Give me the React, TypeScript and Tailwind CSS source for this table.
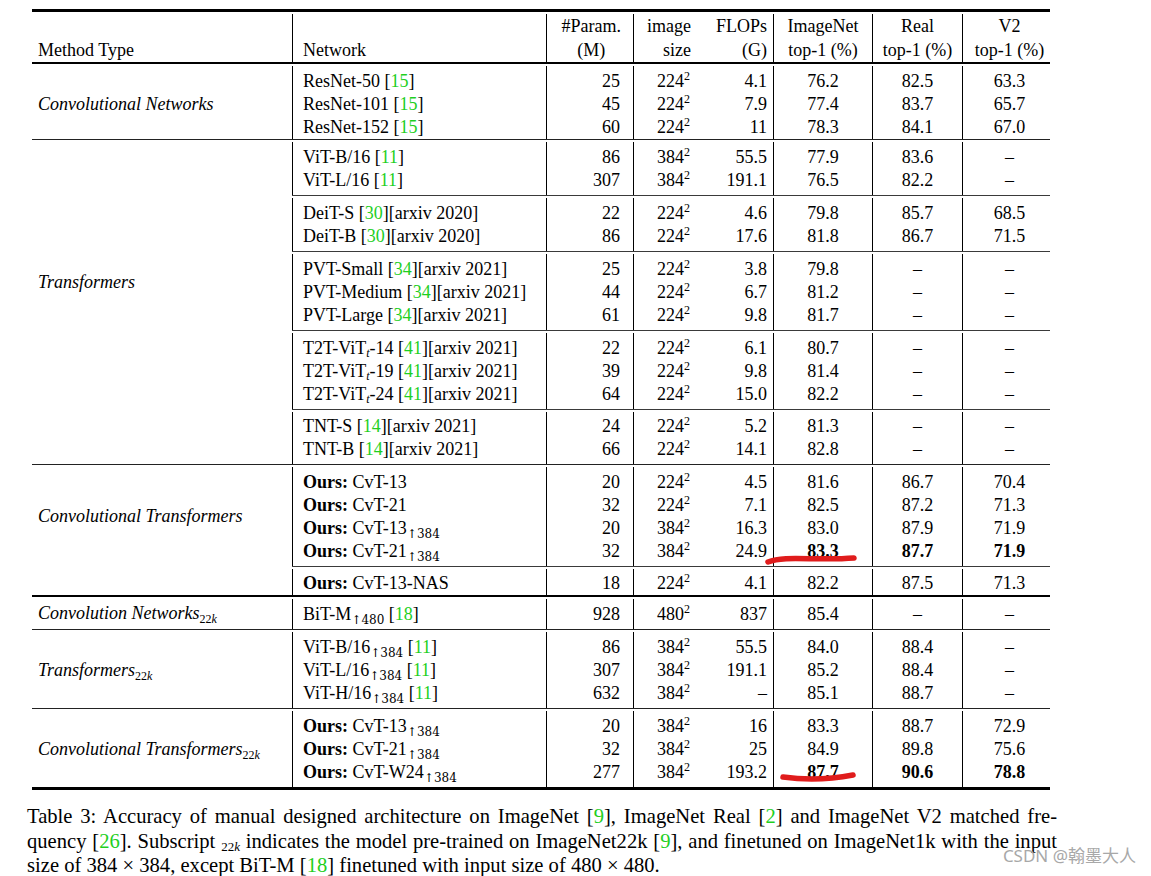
import type { ReactNode } from 'react';

type Row = {
  net: ReactNode;
  param: string;
  img: string;
  flops: string;
  im: string;
  real: string;
  v2: string;
  bold?: boolean;
};

const Cite = ({ n }: { n: number }) => (
  <>
    [<span className="text-[#1fcf1f]">{n}</span>]
  </>
);

const Up = ({ v }: { v: string }) => (
  <sub className="text-[12px] -bottom-[4px] font-['DejaVu_Serif',serif]">↑{v}</sub>
);

const Sq = ({ v }: { v: string }) => (
  <>
    {v}
    <sup className="text-[12px] -top-[7px]">2</sup>
  </>
);

const Ours = ({ children }: { children: ReactNode }) => (
  <>
    <b>Ours:</b> {children}
  </>
);

const K22 = () => (
  <sub className="text-[12px] -bottom-[4px] not-italic">
    22<i>k</i>
  </sub>
);

const Tt = () => <sub className="text-[12px] -bottom-[3px] italic">t</sub>;

const r = (
  net: ReactNode,
  param: string,
  img: string,
  flops: string,
  im: string,
  real: string,
  v2: string,
  bold = false
): Row => ({ net, param, img, flops, im, real, v2, bold });

const arxiv = (y: number) => <>[arxiv {y}]</>;

// pt / pb: padding of the bordered block, tuned per block to sit on the rules like the latex output
type Sub = { rows: Row[]; pt?: string; pb?: string };

const groups: { label: ReactNode; pad: string; subs: Sub[]; after: 'thin' | 'thick' | 'none' }[] = [
  {
    label: 'Convolutional Networks',
    pad: 'pt-[29px]',
    after: 'thin',
    subs: [
      {
        pb: 'pb-0',
        rows: [
          r(<>ResNet-50 <Cite n={15} /></>, '25', '224', '4.1', '76.2', '82.5', '63.3'),
          r(<>ResNet-101 <Cite n={15} /></>, '45', '224', '7.9', '77.4', '83.7', '65.7'),
          r(<>ResNet-152 <Cite n={15} /></>, '60', '224', '11', '78.3', '84.1', '67.0'),
        ],
      },
    ],
  },
  {
    label: 'Transformers',
    pad: 'pt-[131px]',
    after: 'thin',
    subs: [
      {
        rows: [
          r(<>ViT-B/16 <Cite n={11} /></>, '86', '384', '55.5', '77.9', '83.6', '–'),
          r(<>ViT-L/16 <Cite n={11} /></>, '307', '384', '191.1', '76.5', '82.2', '–'),
        ],
      },
      {
        rows: [
          r(<>DeiT-S <Cite n={30} />{arxiv(2020)}</>, '22', '224', '4.6', '79.8', '85.7', '68.5'),
          r(<>DeiT-B <Cite n={30} />{arxiv(2020)}</>, '86', '224', '17.6', '81.8', '86.7', '71.5'),
        ],
      },
      {
        rows: [
          r(<>PVT-Small <Cite n={34} />{arxiv(2021)}</>, '25', '224', '3.8', '79.8', '–', '–'),
          r(<>PVT-Medium <Cite n={34} />{arxiv(2021)}</>, '44', '224', '6.7', '81.2', '–', '–'),
          r(<>PVT-Large <Cite n={34} />{arxiv(2021)}</>, '61', '224', '9.8', '81.7', '–', '–'),
        ],
      },
      {
        rows: [
          r(<>T2T-ViT<Tt />-14 <Cite n={41} />{arxiv(2021)}</>, '22', '224', '6.1', '80.7', '–', '–'),
          r(<>T2T-ViT<Tt />-19 <Cite n={41} />{arxiv(2021)}</>, '39', '224', '9.8', '81.4', '–', '–'),
          r(<>T2T-ViT<Tt />-24 <Cite n={41} />{arxiv(2021)}</>, '64', '224', '15.0', '82.2', '–', '–'),
        ],
      },
      {
        pt: 'pt-[3px]',
        rows: [
          r(<>TNT-S <Cite n={14} />{arxiv(2021)}</>, '24', '224', '5.2', '81.3', '–', '–'),
          r(<>TNT-B <Cite n={14} />{arxiv(2021)}</>, '66', '224', '14.1', '82.8', '–', '–'),
        ],
      },
    ],
  },
  {
    label: 'Convolutional Transformers',
    pad: 'pt-[40px]',
    after: 'thick',
    subs: [
      {
        rows: [
          r(<Ours>CvT-13</Ours>, '20', '224', '4.5', '81.6', '86.7', '70.4'),
          r(<Ours>CvT-21</Ours>, '32', '224', '7.1', '82.5', '87.2', '71.3'),
          r(<Ours>CvT-13<Up v="384" /></Ours>, '20', '384', '16.3', '83.0', '87.9', '71.9'),
          r(<Ours>CvT-21<Up v="384" /></Ours>, '32', '384', '24.9', '83.3', '87.7', '71.9', true),
        ],
      },
      { pt: 'pt-[3px]', pb: 'pb-0', rows: [r(<Ours>CvT-13-NAS</Ours>, '18', '224', '4.1', '82.2', '87.5', '71.3')] },
    ],
  },
  {
    label: <>Convolution Networks<K22 /></>,
    pad: 'pt-[5px]',
    after: 'thin',
    subs: [{ rows: [r(<>BiT-M<Up v="480" /> <Cite n={18} /></>, '928', '480', '837', '85.4', '–', '–')] }],
  },
  {
    label: <>Transformers<K22 /></>,
    pad: 'pt-[29px]',
    after: 'thin',
    subs: [
      {
        rows: [
          r(<>ViT-B/16<Up v="384" /> <Cite n={11} /></>, '86', '384', '55.5', '84.0', '88.4', '–'),
          r(<>ViT-L/16<Up v="384" /> <Cite n={11} /></>, '307', '384', '191.1', '85.2', '88.4', '–'),
          r(<>ViT-H/16<Up v="384" /> <Cite n={11} /></>, '632', '384', '–', '85.1', '88.7', '–'),
        ],
      },
    ],
  },
  {
    label: <>Convolutional Transformers<K22 /></>,
    pad: 'pt-[29px]',
    after: 'none',
    subs: [
      {
        rows: [
          r(<Ours>CvT-13<Up v="384" /></Ours>, '20', '384', '16', '83.3', '88.7', '72.9'),
          r(<Ours>CvT-21<Up v="384" /></Ours>, '32', '384', '25', '84.9', '89.8', '75.6'),
          r(<Ours>CvT-W24<Up v="384" /></Ours>, '277', '384', '193.2', '87.7', '90.6', '78.8', true),
        ],
      },
    ],
  },
];

const Section = ({ rows, pt = 'pt-[4px]', pb = 'pb-[3px]' }: Sub) => {
  const cell = `${pt} ${pb}`;
  return (
    <div className="pt-[2px]">
      <div className="flex leading-[23px]">
        <div className={`w-[254px] border-l border-black pl-[10px] whitespace-nowrap ${cell}`}>
          {rows.map((x, i) => (
            <div key={i}>{x.net}</div>
          ))}
        </div>
        <div className={`w-[87px] border-l border-black pr-[13px] text-right ${cell}`}>
          {rows.map((x, i) => (
            <div key={i}>{x.param}</div>
          ))}
        </div>
        <div className={`w-[80px] border-l border-black text-center ${cell}`}>
          {rows.map((x, i) => (
            <div key={i}>
              <Sq v={x.img} />
            </div>
          ))}
        </div>
        <div className={`w-[60px] pr-[6px] text-right ${cell}`}>
          {rows.map((x, i) => (
            <div key={i}>{x.flops}</div>
          ))}
        </div>
        <div className={`w-[99px] border-l border-black text-center ${cell}`}>
          {rows.map((x, i) => (
            <div key={i} className={x.bold ? 'font-bold' : ''}>{x.im}</div>
          ))}
        </div>
        <div className={`w-[90px] border-l border-black text-center ${cell}`}>
          {rows.map((x, i) => (
            <div key={i} className={x.bold ? 'font-bold' : ''}>{x.real}</div>
          ))}
        </div>
        <div className={`w-[88px] border-l border-black pl-[6px] text-center ${cell}`}>
          {rows.map((x, i) => (
            <div key={i} className={x.bold ? 'font-bold' : ''}>{x.v2}</div>
          ))}
        </div>
      </div>
    </div>
  );
};

const Header = () => (
  <div className="flex leading-[24px] pt-[2px]">
    <div className="w-[260px] pl-[6px] pt-[24px]">Method Type</div>
    <div className="w-[254px] border-l border-black pl-[10px] pt-[24px]">Network</div>
    <div className="w-[87px] border-l border-black pr-[12px] flex justify-end">
      <div className="text-center">
        <div>#Param.</div>
        <div>(M)</div>
      </div>
    </div>
    <div className="w-[80px] border-l border-black pr-[22px] text-right">
      <div>image</div>
      <div>size</div>
    </div>
    <div className="w-[60px] pr-[6px] text-right">
      <div>FLOPs</div>
      <div>(G)</div>
    </div>
    <div className="w-[99px] border-l border-black text-center">
      <div>ImageNet</div>
      <div>top-1 (%)</div>
    </div>
    <div className="w-[90px] border-l border-black text-center">
      <div>Real</div>
      <div>top-1 (%)</div>
    </div>
    <div className="w-[88px] border-l border-black pl-[6px] text-center">
      <div>V2</div>
      <div>top-1 (%)</div>
    </div>
  </div>
);

export default function App() {
  return (
    <div className="relative w-[1151px] h-[876px] bg-white text-black font-['Liberation_Serif','DejaVu_Serif',serif] text-[18px] overflow-hidden">
      <div className="ml-[32px] w-[1018px] pt-[9px]">
        <div className="h-[3px] bg-black" />
        <Header />
        <div className="h-[2px] bg-black" />
        {groups.map((g, gi) => (
          <div key={gi}>
            <div className="flex">
              <div className={`w-[260px] pl-[6px] italic leading-[23px] whitespace-nowrap ${g.pad}`}>{g.label}</div>
              <div>
                {g.subs.map((s, si) => (
                  <div key={si}>
                    {si > 0 && <div className="h-px bg-[#3a3a3a]" />}
                    <Section rows={s.rows} pt={s.pt} pb={s.pb} />
                  </div>
                ))}
              </div>
            </div>
            {g.after === 'thin' && <div className="h-px bg-[#222]" />}
            {g.after === 'thick' && <div className="h-[2px] bg-black" />}
          </div>
        ))}
        <div className="h-[3px] bg-black" />
      </div>

      <div className="ml-[27px] w-[1030px] mt-[14px] text-[20.6px] leading-[24.5px]">
        <div className="whitespace-nowrap text-justify [text-align-last:justify]">
          Table 3: Accuracy of manual designed architecture on ImageNet <Cite n={9} />, ImageNet Real <Cite n={2} /> and
          ImageNet V2 matched fre-
        </div>
        <div className="whitespace-nowrap text-justify [text-align-last:justify]">
          quency <Cite n={26} />. Subscript{' '}
          <sub className="text-[13px] -bottom-[3px]">
            22<i>k</i>
          </sub>{' '}
          indicates the model pre-trained on ImageNet22k <Cite n={9} />, and finetuned on ImageNet1k with the input
        </div>
        <div className="whitespace-nowrap">
          size of 384 × 384, except BiT-M <Cite n={18} /> finetuned with input size of 480 × 480.
        </div>
      </div>

      <div className="absolute right-[15px] bottom-[8px] text-[17px] text-[#a8a8a8] font-['Noto_Sans','Noto_Sans_CJK_SC',sans-serif]">
        CSDN @翰墨大人
      </div>

      <svg className="absolute left-0 top-0 pointer-events-none" width="1151" height="876">
        <path d="M768 562 C 785 555, 815 561, 854 558" stroke="#e01c1c" strokeWidth="5.5" fill="none" strokeLinecap="round" />
        <path d="M783 777 C 805 780, 832 779, 853 775" stroke="#e01c1c" strokeWidth="5.5" fill="none" strokeLinecap="round" />
      </svg>
    </div>
  );
}
